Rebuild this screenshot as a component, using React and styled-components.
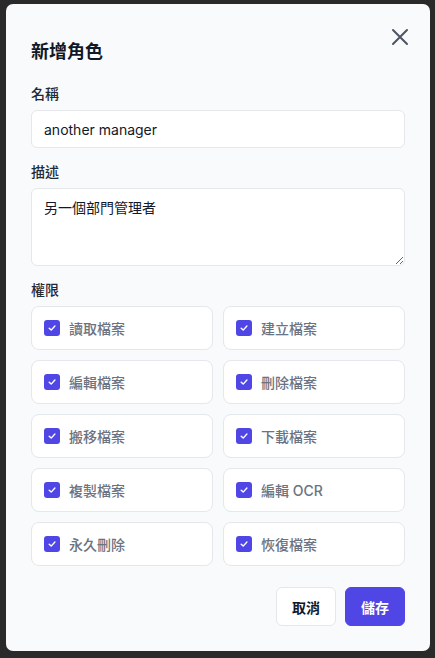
import React, { useState } from 'react';
import styled, { createGlobalStyle } from 'styled-components';

const GlobalStyle = createGlobalStyle`
  html, body {
    margin: 0;
    padding: 0;
    background: #2a2a2a;
  }
  body {
    font-family: Inter, "Noto Sans CJK TC", "Noto Sans", sans-serif;
    -webkit-font-smoothing: antialiased;
  }
`;

const Backdrop = styled.div`
  width: 435px;
  height: 658px;
  padding: 4px 5px 7px 6px;
  box-sizing: border-box;
`;

const Modal = styled.div`
  position: relative;
  box-sizing: border-box;
  width: 424px;
  height: 647px;
  background: #f9fafb;
  border-radius: 7px;
  padding: 34px 25px 25px 25px;
  display: flex;
  flex-direction: column;
`;

const CloseButton = styled.button`
  position: absolute;
  top: 21px;
  right: 18px;
  width: 24px;
  height: 24px;
  padding: 0;
  border: none;
  background: transparent;
  color: #4b5563;
  display: flex;
  align-items: center;
  justify-content: center;
  cursor: pointer;
`;

const Title = styled.h2`
  margin: 0;
  font-size: 18px;
  line-height: 28px;
  font-weight: 700;
  color: #111827;
`;

const Field = styled.div`
  display: flex;
  flex-direction: column;
  gap: 6px;
  margin-top: ${p => p.$top || 14}px;
`;

const Label = styled.label`
  font-size: 14px;
  line-height: 20px;
  font-weight: 500;
  color: #1f2937;
`;

const TextInput = styled.input`
  box-sizing: border-box;
  height: 38px;
  width: 100%;
  padding: 0 12px;
  border: 1px solid #e5e7eb;
  border-radius: 6px;
  background: #fff;
  font: inherit;
  font-size: 14px;
  color: #111827;
  outline: none;
`;

const TextArea = styled.textarea`
  box-sizing: border-box;
  height: 78px;
  width: 100%;
  padding: 9px 12px;
  border: 1px solid #e5e7eb;
  border-radius: 6px;
  background: #fff;
  font: inherit;
  font-size: 14px;
  line-height: 20px;
  color: #111827;
  outline: none;
`;

const PermGrid = styled.div`
  display: grid;
  grid-template-columns: 1fr 1fr;
  gap: 10px;
`;

const PermCard = styled.label`
  box-sizing: border-box;
  height: 44px;
  display: flex;
  align-items: center;
  gap: 9px;
  padding: 0 12px;
  background: #fff;
  border: 1px solid #e5e7eb;
  border-radius: 8px;
  font-size: 14px;
  font-weight: 500;
  color: #6b7280;
  cursor: pointer;
`;

const Box = styled.span`
  width: 16px;
  height: 16px;
  flex: none;
  border-radius: 3px;
  background: ${p => (p.$checked ? '#4f46e5' : '#fff')};
  border: ${p => (p.$checked ? 'none' : '1px solid #d1d5db')};
  display: flex;
  align-items: center;
  justify-content: center;
`;

const Footer = styled.div`
  margin-top: auto;
  display: flex;
  justify-content: flex-end;
  gap: 9px;
`;

const Button = styled.button`
  height: 39px;
  padding: 0 15px;
  border-radius: 6px;
  font: inherit;
  font-size: 14px;
  font-weight: 600;
  cursor: pointer;
  background: ${p => (p.$primary ? '#4f46e5' : '#fff')};
  color: ${p => (p.$primary ? '#fff' : '#111827')};
  border: ${p => (p.$primary ? '1px solid #4f46e5' : '1px solid #e5e7eb')};
`;

const PERMISSIONS = [
  '讀取檔案', '建立檔案',
  '編輯檔案', '刪除檔案',
  '搬移檔案', '下載檔案',
  '複製檔案', '編輯 OCR',
  '永久刪除', '恢復檔案',
];

const Check = () => (
  <svg width="10" height="10" viewBox="0 0 10 10" fill="none">
    <path d="M2.2 5.2 L4.2 7.1 L7.9 3" stroke="#fff" strokeWidth="1.4" strokeLinecap="round" strokeLinejoin="round" />
  </svg>
);

export default function App() {
  const [checked, setChecked] = useState(() => PERMISSIONS.map(() => true));

  const toggle = idx => setChecked(prev => prev.map((v, i) => (i === idx ? !v : v)));

  return (
    <Backdrop>
      <GlobalStyle />
      <Modal>
        <CloseButton aria-label="close">
          <svg width="18" height="18" viewBox="0 0 18 18" fill="none">
            <path d="M2 2 L16 16 M16 2 L2 16" stroke="currentColor" strokeWidth="2" strokeLinecap="round" />
          </svg>
        </CloseButton>
        <Title>新增角色</Title>

        <Field $top={18}>
          <Label>名稱</Label>
          <TextInput defaultValue="another manager" />
        </Field>

        <Field>
          <Label>描述</Label>
          <TextArea defaultValue="另一個部門管理者" />
        </Field>

        <Field>
          <Label>權限</Label>
          <PermGrid>
            {PERMISSIONS.map((name, idx) => (
              <PermCard key={name} onClick={() => toggle(idx)}>
                <Box $checked={checked[idx]}>{checked[idx] && <Check />}</Box>
                {name}
              </PermCard>
            ))}
          </PermGrid>
        </Field>

        <Footer>
          <Button>取消</Button>
          <Button $primary>儲存</Button>
        </Footer>
      </Modal>
    </Backdrop>
  );
}
